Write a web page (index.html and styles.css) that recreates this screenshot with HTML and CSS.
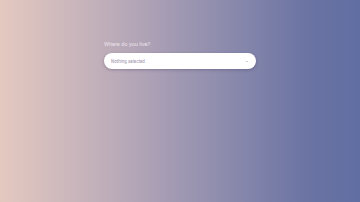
FILE: index.html
```html
<!DOCTYPE html>
<html>
<head>
<meta charset="utf-8">
<link rel="stylesheet" href="styles.css">
</head>
<body>
<main class="page">
  <div class="field">
    <label class="label">Where do you live?</label>
    <div class="select">
      <span class="placeholder">Nothing selected</span>
      <span class="caret"></span>
    </div>
  </div>
</main>
</body>
</html>
```
FILE: styles.css
```css
html, body {
  margin: 0;
  padding: 0;
  height: 100%;
}
body {
  background: linear-gradient(to right, #e4c9c0 0%, #b7a8b8 35%, #9893b0 55%, #6b74a3 85%, #616ea2 100%);
  font-family: Roboto, "Liberation Sans", sans-serif;
}
.page {
  display: flex;
  justify-content: center;
  padding-top: 40px;
}
.field {
  width: 152px;
  display: flex;
  flex-direction: column;
  gap: 5px;
}
.label {
  color: #ece2ea;
  font-size: 5.6px;
  line-height: 8px;
}
.select {
  height: 16px;
  background: #fff;
  border-radius: 8px;
  box-shadow: 0 1px 3px rgba(60, 50, 90, 0.35);
  display: flex;
  align-items: center;
  padding: 0 8px 0 7px;
}
.placeholder {
  flex: 1;
  font-size: 4.5px;
  color: #9d93aa;
}
.caret {
  width: 0;
  height: 0;
  border-left: 1px solid transparent;
  border-right: 1px solid transparent;
  border-top: 1px solid #9d93aa;
}
```
